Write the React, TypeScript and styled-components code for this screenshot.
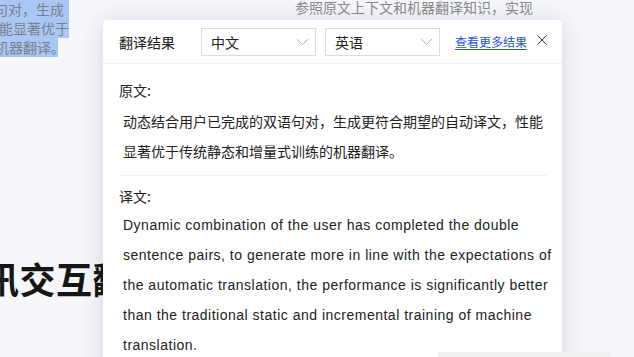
import React from "react";
import styled, { createGlobalStyle } from "styled-components";

const GlobalStyle = createGlobalStyle`
  html, body {
    margin: 0;
    padding: 0;
    background: #f6f7fb;
    overflow: hidden;
  }
  * { box-sizing: border-box; }
`;

const CJK = `"Noto Sans CJK SC", "Noto Sans", sans-serif`;
const LATIN = `"Liberation Sans", "Noto Sans CJK SC", sans-serif`;

const Page = styled.div`
  position: relative;
  width: 634px;
  height: 357px;
  overflow: hidden;
  background: #f6f7fb;
  font-family: ${CJK};
`;

const Backdrop = styled.div`
  display: flex;
  flex-direction: column;
`;

const TopLine = styled.div`
  height: 0;
  margin-left: 295px;
  font-size: 14px;
  line-height: 14px;
  color: #8a8a8a;
  white-space: nowrap;
`;

const Selection = styled.div`
  display: flex;
  flex-direction: column;
  align-items: flex-start;
`;

const SelLine = styled.div<{ $w: number; $shift: number }>`
  width: ${(p) => p.$w}px;
  height: 19px;
  line-height: 19px;
  font-size: 14px;
  color: #7b7f88;
  background: #a8c7f5;
  white-space: nowrap;
  text-indent: ${(p) => p.$shift}px;
`;

const Heading = styled.div`
  margin-top: 201px;
  margin-left: -17px;
  font-size: 36px;
  line-height: 40px;
  font-weight: 700;
  color: #161616;
  white-space: nowrap;
  letter-spacing: 0.5px;
`;

const Popup = styled.div`
  position: absolute;
  left: 103px;
  top: 20px;
  width: 459px;
  height: 360px;
  background: #ffffff;
  border-radius: 4px 4px 0 0;
  box-shadow: 0 2px 22px rgba(40, 45, 60, 0.16);
  display: flex;
  flex-direction: column;
`;

const Header = styled.div`
  height: 44px;
  display: flex;
  align-items: center;
  padding: 0 15px 0 16px;
  border-bottom: 1px solid #efefef;
  flex-shrink: 0;
`;

const Title = styled.div`
  font-size: 14px;
  color: #222;
  width: 82px;
  flex-shrink: 0;
`;

const Select = styled.div<{ $gap: number }>`
  width: 115px;
  height: 28px;
  margin-right: ${(p) => p.$gap}px;
  border: 1px solid #dcdcdc;
  display: flex;
  align-items: center;
  justify-content: space-between;
  padding: 0 6px 0 9px;
  font-size: 14px;
  color: #222;
  flex-shrink: 0;
`;

const Chevron = () => (
  <svg width="13" height="8" viewBox="0 0 13 8" fill="none">
    <polyline points="1,1 6.5,6.5 12,1" stroke="#b4b4b4" strokeWidth="1" />
  </svg>
);

const MoreLink = styled.a`
  font-size: 12px;
  color: #2456d6;
  text-decoration: underline;
  text-underline-offset: 2px;
  white-space: nowrap;
  margin-right: 10px;
`;

const Close = styled.div`
  width: 10px;
  height: 10px;
  display: flex;
  margin-top: -4px;
`;

const Body = styled.div`
  padding: 16px 15px 0 16px;
  display: flex;
  flex-direction: column;
`;

const Label = styled.div<{ $top: number }>`
  margin-top: ${(p) => p.$top}px;
  font-size: 14px;
  line-height: 20px;
  color: #222;
`;

const Para = styled.p<{ $latin?: boolean; $top: number }>`
  margin: ${(p) => p.$top}px ${(p) => (p.$latin ? "-8px" : "0")} 0 0;
  padding-left: 4px;
  font-family: ${(p) => (p.$latin ? LATIN : CJK)};
  font-size: 14px;
  line-height: 30px;
  letter-spacing: ${(p) => (p.$latin ? "0.5px" : "0")};
  color: #222;
`;

const Divider = styled.div`
  height: 1px;
  background: #f0f0f0;
  margin-top: 9px;
`;

const Dock = styled.div`
  position: absolute;
  left: 438px;
  top: 352px;
  width: 172px;
  height: 10px;
  background: #f0f0f0;
  padding-left: 12px;
`;

export default function App() {
  return (
    <>
      <GlobalStyle />
      <Page>
        <Backdrop>
          <TopLine>参照原文上下文和机器翻译知识，实现</TopLine>
          <Selection>
            <SelLine $w={69} $shift={-6}>句对，生成</SelLine>
            <SelLine $w={69} $shift={-1}>能显著优于</SelLine>
            <SelLine $w={58} $shift={-5}>机器翻译。</SelLine>
          </Selection>
          <Heading>讯交互翻</Heading>
        </Backdrop>

        <Popup>
          <Header>
            <Title>翻译结果</Title>
            <Select $gap={9}>
              中文
              <Chevron />
            </Select>
            <Select $gap={15}>
              英语
              <Chevron />
            </Select>
            <MoreLink>查看更多结果</MoreLink>
            <Close>
              <svg width="10" height="10" viewBox="0 0 10 10">
                <path d="M0.5 0.5 L9.5 9.5 M9.5 0.5 L0.5 9.5" stroke="#333" strokeWidth="1" />
              </svg>
            </Close>
          </Header>
          <Body>
            <Label $top={0}>原文:</Label>
            <Para $top={6}>
              动态结合用户已完成的双语句对，生成更符合期望的自动译文，性能显著优于传统静态和增量式训练的机器翻译。
            </Para>
            <Divider />
            <Label $top={10}>译文:</Label>
            <Para $latin $top={4}>
              Dynamic combination of the user has completed the double sentence pairs, to
              generate more in line with the expectations of the automatic translation, the
              performance is significantly better than the traditional static and incremental
              training of machine translation.
            </Para>
          </Body>
        </Popup>

        <Dock>
          <svg width="28" height="6" viewBox="0 0 28 6" fill="none">
            <path d="M1 5.5 C6 1, 14 0.5, 20 2 C22 1, 24 0.8, 26 1.5" stroke="#8a8a8a" strokeWidth="1" />
          </svg>
        </Dock>
      </Page>
    </>
  );
}
